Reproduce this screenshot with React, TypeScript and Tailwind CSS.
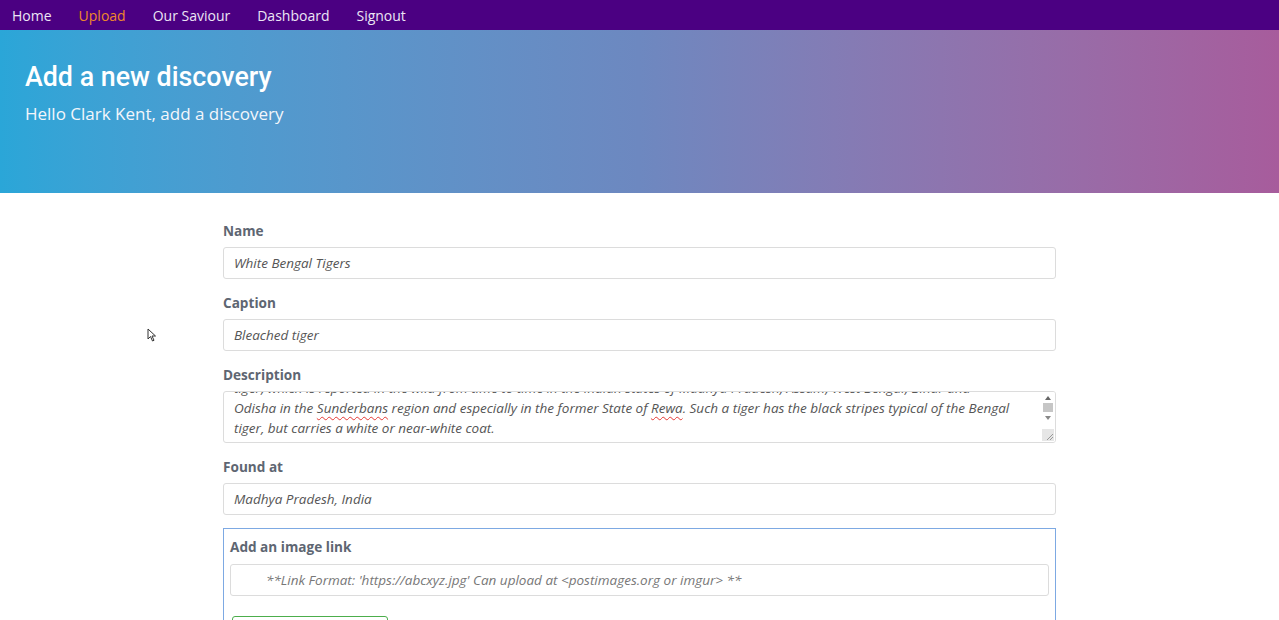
import React from 'react';

const navLinks = ['Home', 'Upload', 'Our Saviour', 'Dashboard', 'Signout'];

const sans = "font-['Open_Sans',sans-serif]";

function Field({ label, value }: { label: string; value: string }) {
  return (
    <div className="mb-[13px]">
      <label className="block text-[13.6px] leading-[20px] pt-[1px] font-bold text-[#5e6672] mb-[6px]">{label}</label>
      <div className="h-[32px] rounded-[3px] border border-[#dcdcdc] px-[10px] flex items-center text-[13.5px] italic text-[#555]">
        {value}
      </div>
    </div>
  );
}

function Spell({ children }: { children: React.ReactNode }) {
  return <span className="underline decoration-wavy decoration-[#e53935] decoration-1 underline-offset-[3px]">{children}</span>;
}

export default function App() {
  return (
    <div className={`${sans} min-h-screen bg-white relative overflow-hidden`}>
      {/* top nav */}
      <nav className="h-[30px] bg-[#4b0082] flex items-center pl-[12px] gap-[27px] text-[14px]">
        {navLinks.map((l) => (
          <a key={l} className={l === 'Upload' ? 'text-[#f0882a]' : 'text-[#ece6f5]'}>
            {l}
          </a>
        ))}
      </nav>

      {/* hero */}
      <header className="h-[163px] bg-gradient-to-r from-[#2aa6d8] via-[#6d88c0] to-[#a75c9c] px-[25px] pt-[30px] text-white">
        <h1 className="font-['Roboto',sans-serif] font-medium text-[26.8px] leading-[34px]">Add a new discovery</h1>
        <p className="text-[17px] leading-[24px] mt-[8px] text-[#f3f6fb]">Hello Clark Kent, add a discovery</p>
      </header>

      {/* form */}
      <main className="w-[833px] ml-[223px] pt-[27px]">
        <Field label="Name" value="White Bengal Tigers" />
        <Field label="Caption" value="Bleached tiger" />

        <div className="mb-[13px]">
          <label className="block text-[13.6px] leading-[20px] pt-[1px] font-bold text-[#5e6672] mb-[6px]">Description</label>
          <div className="h-[52px] rounded-[3px] border border-[#dcdcdc] flex overflow-hidden">
            <div className="flex-1 overflow-hidden pl-[10px] text-[13.5px] italic text-[#555] leading-[20px]">
              <div className="-mt-[14px] whitespace-nowrap">
                <div>tiger, which is reported in the wild from time to time in the Indian states of Madhya Pradesh, Assam, West Bengal, Bihar and</div>
                <div>
                  Odisha in the <Spell>Sunderbans</Spell> region and especially in the former State of <Spell>Rewa</Spell>. Such a tiger has the black stripes typical of the Bengal
                </div>
                <div>tiger, but carries a white or near-white coat.</div>
              </div>
            </div>
            {/* scrollbar */}
            <div className="w-[14px] flex flex-col items-center pt-[3px] pb-[1px] bg-white">
              <div className="w-0 h-0 border-l-[3px] border-r-[3px] border-b-[4px] border-l-transparent border-r-transparent border-b-[#666] mt-[1px]" />
              <div className="w-[10px] h-[9px] bg-[#c6c6c6] mt-[3px]" />
              <div className="w-0 h-0 border-l-[3px] border-r-[3px] border-t-[4px] border-l-transparent border-r-transparent border-t-[#888] mt-[4px]" />
              <div className="w-[12px] h-[12px] mt-auto bg-[#e6e6e6] relative">
                <svg viewBox="0 0 12 12" className="w-[12px] h-[12px]">
                  <path d="M11 5 L5 11 M11 8 L8 11" stroke="#999" strokeWidth="1" />
                </svg>
              </div>
            </div>
          </div>
        </div>

        <Field label="Found at" value="Madhya Pradesh, India" />

        <div className="border border-[#7da9e3] px-[6px] pt-[8px] pb-[20px]">
          <label className="block text-[13.6px] leading-[20px] font-bold text-[#5e6672] mb-[7px]">Add an image link</label>
          <div className="h-[32px] rounded-[3px] border border-[#dcdcdc] pl-[35px] flex items-center text-[13.5px] italic text-[#777]">
            **Link Format: 'https://abcxyz.jpg' Can upload at &lt;postimages.org or imgur&gt; **
          </div>
          <button className="mt-[20px] ml-[2px] w-[156px] h-[46px] border border-[#4cae4c] rounded-[3px] text-[#4cae4c] text-[14px]">
            Add Discovery
          </button>
        </div>
      </main>

      {/* mouse pointer */}
      <svg className="absolute left-[147px] top-[328px]" width="10" height="14" viewBox="0 0 10 14">
        <path d="M1 1 L1 11 L3.5 8.5 L5.5 13 L7 12.3 L5 8 L8.5 8 Z" fill="white" stroke="#333" strokeWidth="1" />
      </svg>
    </div>
  );
}
